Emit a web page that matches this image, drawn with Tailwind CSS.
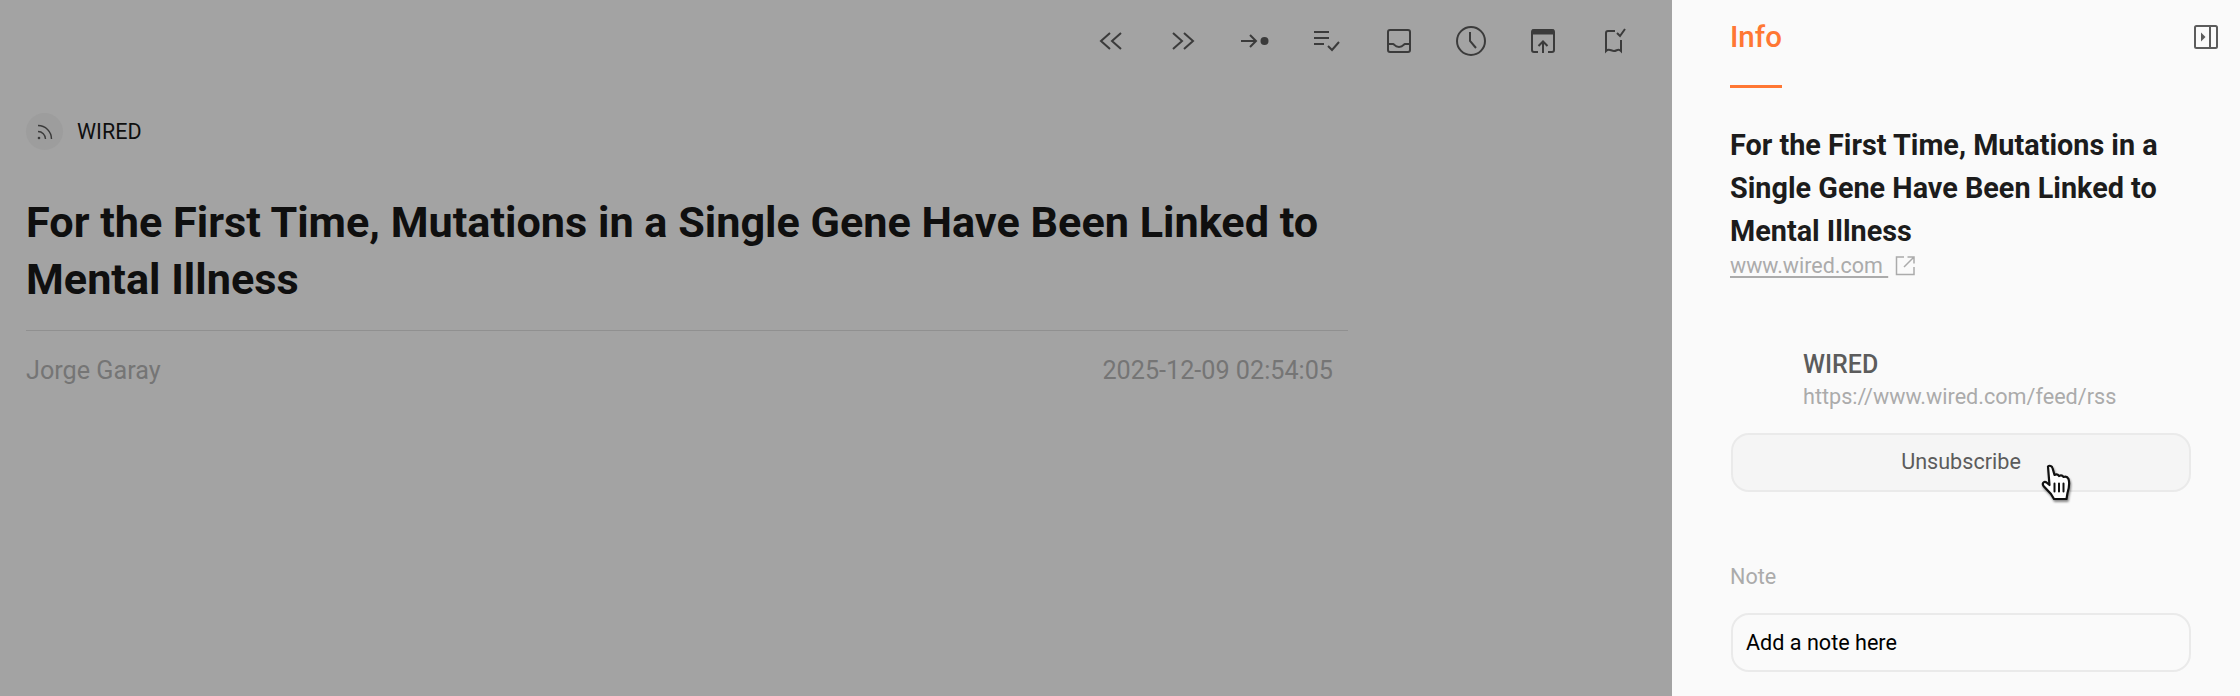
<!DOCTYPE html>
<html lang="en">
<head>
    <meta charset="UTF-8">
    <title>Article info</title>
    <script src="https://cdn.jsdelivr.net/npm/@tailwindcss/browser@4"></script>
</head>
<body class="w-[2240px] h-[696px] overflow-hidden font-['Roboto',sans-serif] bg-[#a3a3a3]">
    <div class="flex h-[696px] relative">
        <!-- article, dimmed -->
        <main class="w-[1672px] h-full bg-[#a3a3a3] pl-[26px] text-[#0f0f0f]">
            <div class="flex justify-end pr-[45px] gap-[48px] pt-[25px] h-[113px] text-[#3b3b3b]">
                <svg class="w-6 h-8" viewBox="0 0 24 32" fill="none" stroke="currentColor" stroke-width="2"><path d="M11 8l-9 8 9 8M22 8l-9 8 9 8"/></svg>
                <svg class="w-6 h-8" viewBox="0 0 24 32" fill="none" stroke="currentColor" stroke-width="2"><path d="M2 8l9 8-9 8M13 8l9 8-9 8"/></svg>
                <svg class="w-7 h-8 -mx-0.5" viewBox="0 0 28 32" fill="none" stroke="currentColor" stroke-width="2"><path d="M0 16h15M9 10l6 6-6 6"/><circle cx="23.500" cy="16" r="4" fill="currentColor" stroke="none"/></svg>
                <svg class="w-[26px] h-8 -mx-px" viewBox="0 0 26 32" fill="none" stroke="currentColor" stroke-width="2"><path d="M0 7h15M0 13h15M0 19h10M14 21l4 4 7-8"/></svg>
                <svg class="w-6 h-8" viewBox="0 0 24 32" fill="none" stroke="currentColor" stroke-width="2"><rect x="1" y="5" width="22" height="22" rx="2"/><path d="M1 19h5c1.500 0 1.500 3 6 3s4.500-3 6-3h5"/></svg>
                <svg class="w-[30px] h-8 -mx-[3px]" viewBox="0 0 30 32" fill="none" stroke="currentColor" stroke-width="2"><circle cx="15" cy="16" r="14"/><path d="M14 7v9l6 7"/></svg>
                <svg class="w-6 h-8" viewBox="0 0 24 32" fill="none" stroke="currentColor" stroke-width="2"><path d="M7 27H3a2 2 0 0 1-2-2V7a2 2 0 0 1 2-2h18a2 2 0 0 1 2 2v18a2 2 0 0 1-2 2h-4"/><path d="M1 7h22" stroke-width="5"/><path d="M12 28V17M7.500 21l4.500-4.500 4.500 4.500"/></svg>
                <svg class="w-6 h-8" viewBox="0 0 24 32" fill="none" stroke="currentColor" stroke-width="2"><path d="M12 6H5a2 2 0 0 0-2 2v18c3-3 5 0 8 0s4-3 7 0V15"/><path d="M14 8l3 3 5-7"/></svg>
            </div>
            <div class="flex items-center gap-[14px] h-[37px]">
                <div class="w-[37px] h-[37px] rounded-full bg-[#9d9d9d] flex items-center justify-center text-[#3b3b3b]">
                    <svg class="w-4 h-4" viewBox="0 0 16 16" fill="none" stroke="currentColor" stroke-width="1.400"><circle cx="2" cy="14" r="1.300" fill="currentColor" stroke="none"/><path d="M1 7.500a7.500 7.500 0 0 1 7.500 7.500M1 1.500a13.500 13.500 0 0 1 13.500 13.500"/></svg>
                </div>
                <span class="text-[21.500px] leading-none">WIRED</span>
            </div>
            <h1 class="mt-[44px] w-[1322px] text-[43.200px] leading-[57px] font-bold">For the First Time, Mutations in a Single Gene Have Been Linked to Mental Illness</h1>
            <div class="w-[1322px] mt-[22px] border-t border-[#909090] pt-[24px] pr-[15px] flex justify-between text-[25.200px] leading-[32px] text-[#757575]">
                <span>Jorge Garay</span>
                <span>2025-12-09 02:54:05</span>
            </div>
        </main>

        <!-- info panel -->
        <aside class="w-[568px] h-full bg-[#fafafa] pl-[59px] pr-[49px] text-[#1c1c1c]">
            <div class="relative h-[88px]">
                <div class="inline-block h-[88px] -ml-px border-b-[3px] border-[#ff7733] pt-[17px] text-[29.500px] leading-[40px] font-medium text-[#ff7733]">Info</div>
                <svg class="absolute right-[-27px] top-[25px] w-6 h-6 text-[#5c5c5c]" viewBox="0 0 24 24" fill="none" stroke="currentColor" stroke-width="2"><rect x="1" y="1" width="22" height="22" rx="1.500"/><path d="M16 1v22"/><path d="M7 7.500l4.500 4.500L7 16.500z" fill="currentColor" stroke="none"/></svg>
            </div>
            <h2 class="mt-[36px] -ml-px text-[28.800px] leading-[43px] font-bold">For the First Time, Mutations in a Single Gene Have Been Linked to Mental Illness</h2>
            <a class="flex items-center gap-[7px] w-fit -ml-px text-[21.500px] leading-[26px] text-[#ababab]">
                <span class="underline underline-offset-[3px]">www.wired.com&nbsp;</span>
                <svg class="w-5 h-5" viewBox="0 0 20 20" fill="none" stroke="currentColor" stroke-width="1.500"><path d="M9 1H1.500v17.500H19V11M19 1L9 11M12.500 1H19v6.500"/></svg>
            </a>
            <div class="mt-[72px] ml-[72px] text-[25px] leading-[28px] font-medium text-[#5c5c5c]">WIRED</div>
            <div class="mt-[5px] ml-[72px] text-[21.600px] leading-[26px] text-[#ababab]">https://www.wired.com/feed/rss</div>
            <button class="block mt-[23px] w-[460px] h-[59px] rounded-[18px] border-2 border-[#eaeaea] bg-[#f5f5f5] text-[21.600px] text-[#5c5c5c]">Unsubscribe</button>
            <div class="mt-[72px] -ml-px text-[21.600px] leading-[26px] text-[#ababab]">Note</div>
            <div class="mt-[23px] w-[460px] h-[59px] rounded-[18px] border-2 border-[#eaeaea] pl-[13px] pt-[1px] flex items-center text-[21.600px] text-black">Add a note here</div>
        </aside>

        <!-- mouse pointer -->
        <svg class="absolute left-[2041px] top-[464px] w-[32px] h-[38px] drop-shadow-[1px_2px_1px_rgba(0,0,0,0.45)]" viewBox="0 0 32 38" fill="#fff" stroke="#111" stroke-width="2.200" stroke-linejoin="round" stroke-linecap="round">
            <path d="M7 2.500c1.500-1.500 4-.5 4.500 1.500l2 7c2-1 3.500-.5 4.500 1 2-1 3.500-.5 4.500 1 2-.8 4-.2 5 2 1 3 .5 9-1 14l-1 6H13l-3-5-7.500-8c-2-3 1-5 3-3.500l3 2.500z"/>
            <path d="M13.500 19.500v8M18 19.500v8M22.500 19.500v8" stroke-width="2"/>
        </svg>
    </div>
</body>
</html>
